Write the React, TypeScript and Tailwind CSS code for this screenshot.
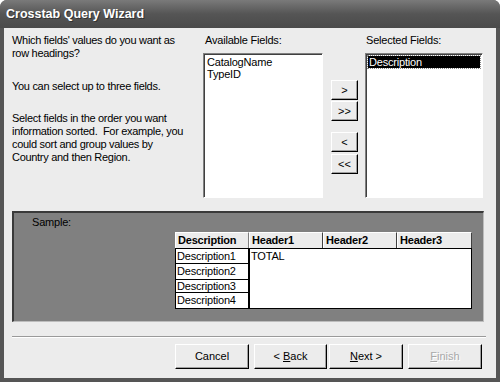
const font = "font-['Liberation_Sans',Arial,sans-serif]";

const XpButton = ({ children, w, disabled }: { children: React.ReactNode; w: string; disabled?: boolean }) => (
  <div
    className={`${w} h-[25px] flex items-center justify-center bg-[#ececec] border-t border-l border-white border-r border-b border-r-black border-b-black shadow-[inset_-1px_-1px_0_#a0a0a0] text-[11px] whitespace-pre ${
      disabled ? "text-[#a8a8a8] [text-shadow:1px_1px_0_#fff]" : "text-black"
    }`}
  >
    {children}
  </div>
);

const ArrowButton = ({ label }: { label: string }) => (
  <div className="w-[27px] h-[20px] flex items-center justify-center bg-[#ececec] border-t border-l border-white border-r border-b border-r-black border-b-black shadow-[inset_-1px_-1px_0_#a0a0a0] text-[11px] leading-none">
    {label}
  </div>
);

const ListBox = ({ children }: { children: React.ReactNode }) => (
  <div className="h-[145px] bg-white border border-t-[#808080] border-l-[#808080] border-r-white border-b-white shadow-[inset_1px_1px_0_#404040] pt-[2px] px-[2px] text-[11px] leading-[12px] tracking-[-0.2px]">
    {children}
  </div>
);

export default function App() {
  return (
    <div className={`w-[500px] h-[382px] bg-[#555] rounded-t-[7px] flex flex-col ${font} text-black`}>
      <div className="h-[28px] shrink-0 rounded-t-[7px] bg-gradient-to-b from-[#7a7a7a] via-[#555] to-[#4a4a4a] flex items-center pl-[6px]">
        <span className="text-white font-bold text-[12.5px] [text-shadow:1px_1px_0_#333]">Crosstab Query Wizard</span>
      </div>
      <div className="mx-[4px] mb-[4px] flex-1 bg-[#ececec] flex flex-col">
        <div className="flex pt-[6px] pl-[8px]">
          <div className="w-[191px] text-[11px] leading-[13px] tracking-[-0.3px]">
            <p>Which fields' values do you want as<br />row headings?</p>
            <p className="mt-[20px]">You can select up to three fields.</p>
            <p className="mt-[19px] whitespace-pre">
              Select fields in the order you want{"\n"}information sorted.  For example, you{"\n"}could sort and group values by{"\n"}Country and then Region.
            </p>
          </div>
          <div className="w-[120px]">
            <div className="pl-[2px] text-[11px] leading-[13px] tracking-[-0.2px]">Available Fields:</div>
            <div className="mt-[6px]">
              <ListBox>
                <div className="pl-[1px]">CatalogName</div>
                <div className="pl-[1px]">TypeID</div>
              </ListBox>
            </div>
          </div>
          <div className="ml-[8px] pt-[46px] flex flex-col">
            <ArrowButton label=">" />
            <div className="mt-[1px]">
              <ArrowButton label=">>" />
            </div>
            <div className="mt-[11px]">
              <ArrowButton label="<" />
            </div>
            <div className="mt-[2px]">
              <ArrowButton label="<<" />
            </div>
          </div>
          <div className="ml-[7px] w-[118px]">
            <div className="pl-[1px] text-[11px] leading-[13px] tracking-[-0.2px]">Selected Fields:</div>
            <div className="mt-[6px]">
              <ListBox>
                <div className="bg-black text-white outline outline-1 outline-dotted outline-[#888] px-[1px]">Description</div>
              </ListBox>
            </div>
          </div>
        </div>

        <div className="mt-[13px] ml-[8px] w-[472px] h-[111px] bg-[#808080] border-t-2 border-l-2 border-t-[#3a3a3a] border-l-[#3a3a3a] border-r border-b border-r-[#bdbdbd] border-b-[#bdbdbd] flex flex-col">
          <div className="pl-[18px] pt-[3px] text-[11px] leading-[13px] tracking-[-0.2px]">Sample:</div>
          <div className="ml-[161px] mt-[3px] flex text-[11px] tracking-[-0.2px]">
            <div className="w-[74px] flex flex-col">
              <div className="h-[16px] bg-[#ececec] border-t border-l border-white border-r border-r-[#808080] font-bold text-[11px] leading-[15px] pl-[2px]">
                Description
              </div>
              <div className="bg-white border border-black">
                <div className="h-[15px] leading-[14px] pl-[1px] border-b border-black">Description1</div>
                <div className="h-[16px] leading-[15px] pl-[1px] border-b border-black">Description2</div>
                <div className="h-[13px] leading-[13px] pl-[1px] border-b border-black">Description3</div>
                <div className="h-[15px] leading-[15px] pl-[1px]">Description4</div>
              </div>
            </div>
            <div className="w-[223px] flex flex-col">
              <div className="h-[16px] flex font-bold leading-[15px]">
                <div className="w-[74px] bg-[#ececec] border-t border-l border-white border-r border-r-[#404040] pl-[2px]">Header1</div>
                <div className="w-[74px] bg-[#ececec] border-t border-l border-white border-r border-r-[#404040] pl-[2px]">Header2</div>
                <div className="w-[75px] bg-[#ececec] border-t border-l border-white border-r border-r-[#404040] pl-[2px]">Header3</div>
              </div>
              <div className="h-[61px] bg-white border border-black pl-[1px] leading-[14px]">TOTAL</div>
            </div>
          </div>
        </div>

        <div className="mt-[14px] ml-[8px] w-[474px] h-[2px] border-t border-t-[#9a9a9a] border-b border-b-white" />

        <div className="mt-[6px] ml-[171px] flex">
          <XpButton w="w-[74px]">Cancel</XpButton>
          <div className="ml-[5px]">
            <XpButton w="w-[73px]">
              {"< "}<span className="underline">B</span>ack
            </XpButton>
          </div>
          <div className="ml-[2px]">
            <XpButton w="w-[74px]">
              <span className="underline">N</span>{"ext >"}
            </XpButton>
          </div>
          <div className="ml-[5px]">
            <XpButton w="w-[74px]" disabled>
              <span className="underline">F</span>inish
            </XpButton>
          </div>
        </div>
      </div>
    </div>
  );
}
